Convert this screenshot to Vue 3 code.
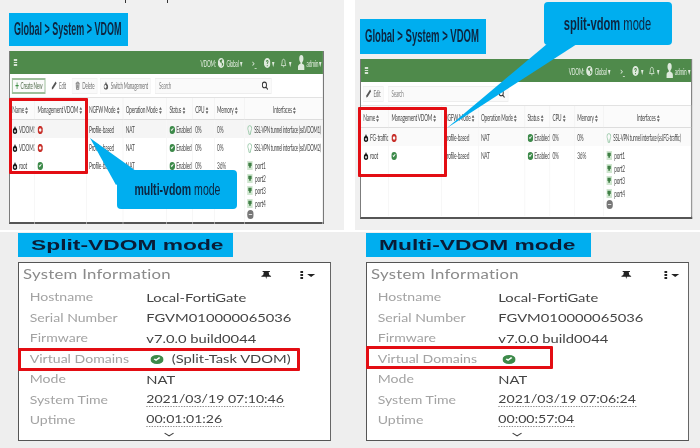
<template>
  <div class="page">
    <svg class="sprites" width="0" height="0" aria-hidden="true">
      <symbol id="i-vdom" viewBox="0 0 16 16" preserveAspectRatio="none"><path fill-rule="evenodd" d="M8 0l2.500 4.200C13.500 5.500 15 8 15 10.500 15 14 12 16 8 16s-7-2-7-5.500C1 8 2.500 5.500 5.500 4.200zM8 8a2.500 2.500 0 1 0 0 5 2.500 2.500 0 0 0 0-5z"/></symbol>
      <symbol id="i-check" viewBox="0 0 16 16" preserveAspectRatio="none"><path fill-rule="evenodd" d="M8 0a8 8 0 1 1 0 16A8 8 0 0 1 8 0zm4 5.200l-1.600-1.500L6.800 7.400 5.500 6 3.900 7.500l2.900 3z"/></symbol>
      <symbol id="i-no" viewBox="0 0 16 16" preserveAspectRatio="none"><path fill-rule="evenodd" d="M5 0h6l4 4v8l-4 4H5l-4-4V4zm3 4.500a3.500 3.500 0 1 0 0 7 3.500 3.500 0 0 0 0-7z"/></symbol>
      <symbol id="i-globe" viewBox="0 0 16 16" preserveAspectRatio="none"><path d="M8 0a8 8 0 1 1 0 16A8 8 0 0 1 8 0zM4 4l2 3 3 1 1 3-2 3 5-3-1-3-3-1 1-3 2-1-3-1z"/></symbol>
      <symbol id="i-help" viewBox="0 0 16 16" preserveAspectRatio="none"><path fill-rule="evenodd" d="M8 0a8 8 0 1 1 0 16A8 8 0 0 1 8 0zM7 11v2h2v-2zM8 3C6 3 5 4.200 5 6h2c0-1 .4-1.300 1-1.300s1 .4 1 1c0 1.200-2 1.300-2 3.800h2c0-1.800 2-2 2-4C11 4 9.800 3 8 3z"/></symbol>
      <symbol id="i-bell" viewBox="0 0 16 16" preserveAspectRatio="none"><path fill="none" stroke="currentColor" stroke-width="1.500" d="M8 2c-3 0-3.500 3-3.500 5S3 11 2.500 12h11C13 11 11.500 9 11.500 7S11 2 8 2zM6.500 14h3"/></symbol>
      <symbol id="i-user" viewBox="0 0 16 24" preserveAspectRatio="none"><path d="M8 0a5 6 0 0 1 5 6c0 2.500-1.500 5-3 6v2c3 .5 6 2.500 6 5v5H0v-5c0-2.500 3-4.500 6-5v-2C4.500 11 3 8.500 3 6a5 6 0 0 1 5-6z"/></symbol>
      <symbol id="i-mag" viewBox="0 0 16 16" preserveAspectRatio="none"><path fill="none" stroke="currentColor" stroke-width="2.200" d="M7 2a5 5 0 1 1 0 10A5 5 0 0 1 7 2zm3.500 8.500L15 15"/></symbol>
      <symbol id="i-pencil" viewBox="0 0 16 16" preserveAspectRatio="none"><path d="M12 1l3 3L5 14l-4 1 1-4z"/></symbol>
      <symbol id="i-trash" viewBox="0 0 16 16" preserveAspectRatio="none"><path fill="none" stroke="currentColor" stroke-width="1.300" d="M3 4h10M6 4V2h4v2M4 4l1 11h6l1-11M7 6v7M9 6v7"/></symbol>
      <symbol id="i-switch" viewBox="0 0 16 16" preserveAspectRatio="none"><path fill-rule="evenodd" d="M8 1l2 4c2.500 1 4 3 4 5.500C14 14 11.500 15 8 15s-6-1-6-4.500C2 8 3.500 6 6 5zm0 6.500a3 3 0 1 0 0 5 3 3 0 0 0 0-5z"/></symbol>
      <symbol id="i-port" viewBox="0 0 14 16" preserveAspectRatio="none"><path fill="#cfe6cf" d="M0 0h14v16H0z"/><path fill="#3f7f45" d="M3 3h8v6h-2v3H5V9H3z"/></symbol>
      <symbol id="i-tunnel" viewBox="0 0 12 16" preserveAspectRatio="none"><path fill="none" stroke="#8fc3a0" stroke-width="1.600" d="M6 1a4.500 4.500 0 0 1 4.500 4.500C10.500 8 8 9 7.500 15h-3C4 9 1.500 8 1.500 5.500A4.500 4.500 0 0 1 6 1z"/></symbol>
      <symbol id="i-more" viewBox="0 0 16 16" preserveAspectRatio="none"><circle cx="8" cy="8" r="8" fill="#777"/><path fill="#ddd" d="M4 7h8v2H4z"/></symbol>
      <symbol id="i-sort" viewBox="0 0 8 14" preserveAspectRatio="none"><path fill="#666" d="M4 0l3.500 5.500h-7zM4 14L.5 8.500h7z"/></symbol>
      <symbol id="i-pin" viewBox="0 0 20 16" preserveAspectRatio="none"><path d="M4 0h12v2h-2l1 6 3 2v1.500h-7L10 16l-1-4.500H2V10l3-2 1-6H4z"/></symbol>
    </svg>

    <div class="top">
      <section v-for="w in windows" :key="w.side" class="panel" :class="w.side">
        <i v-if="w.side === 'left'" class="cut cut-a"></i>
        <i v-if="w.side === 'left'" class="cut cut-b"></i>
        <h2 class="label"><span>Global &gt; System &gt; VDOM</span></h2>

        <div class="window-slot">
          <div class="window">
            <header class="topbar">
              <div class="burger"><b></b><b></b><b></b></div>
              <div class="topbar-right">
                <span>VDOM:</span>
                <svg class="ic-top"><use href="#i-globe" /></svg>
                <span>Global ▾</span>
                <span class="term">&gt;_</span>
                <svg class="ic-top help"><use href="#i-help" /></svg><span>▾</span>
                <svg class="ic-top bell"><use href="#i-bell" /></svg><span>▾</span>
                <svg class="ic-user"><use href="#i-user" /></svg>
                <span>admin ▾</span>
              </div>
            </header>

            <div class="toolbar">
              <button v-if="w.full" class="btn primary"><em>+</em>Create New</button>
              <button class="btn edit"><svg class="ic-btn"><use href="#i-pencil" /></svg>Edit</button>
              <button v-if="w.full" class="btn"><svg class="ic-btn"><use href="#i-trash" /></svg>Delete</button>
              <button v-if="w.full" class="btn"><svg class="ic-btn"><use href="#i-switch" /></svg>Switch Management</button>
              <div class="search">
                <span>Search</span>
                <svg class="ic-mag"><use href="#i-mag" /></svg>
              </div>
            </div>

            <table class="grid">
              <colgroup>
                <col v-for="(c, i) in w.cols" :key="i" :style="{ width: colWidth(w, c) }" />
              </colgroup>
              <thead>
                <tr>
                  <th v-for="h in heads" :key="h" :class="{ mid: h === 'Interfaces' }">
                    {{ h }} <svg class="sort"><use href="#i-sort" /></svg>
                  </th>
                </tr>
              </thead>
              <tbody>
                <tr v-for="(r, i) in w.rows" :key="r.name" :class="{ shaded: i === 0 && w.rows.length > 2, tinted: i === 0 && w.rows.length === 2 }">
                  <td class="name"><svg class="ic-vdom"><use href="#i-vdom" /></svg>{{ r.name }}</td>
                  <td>
                    <svg v-if="r.mgmt" class="ic-flag ok"><use href="#i-check" /></svg>
                    <svg v-else class="ic-flag bad"><use href="#i-no" /></svg>
                  </td>
                  <td>Profile-based</td>
                  <td>NAT</td>
                  <td><svg class="ic-status ok"><use href="#i-check" /></svg> Enabled</td>
                  <td>0%</td>
                  <td>{{ r.memory }}</td>
                  <td class="ifaces">
                    <template v-if="r.iface">
                      <svg class="ic-tunnel"><use href="#i-tunnel" /></svg> <span class="tunnel">{{ r.iface }}</span>
                    </template>
                    <template v-else>
                      <div v-for="p in ports" :key="p" class="port">
                        <svg class="ic-port"><use href="#i-port" /></svg> {{ p }}
                      </div>
                      <svg class="ic-more"><use href="#i-more" /></svg>
                    </template>
                  </td>
                </tr>
              </tbody>
            </table>
          </div>
        </div>

        <div class="redbox"></div>
        <svg class="tail" width="345" height="230">
          <polygon :points="w.tail" fill="#00aeef" />
        </svg>
        <div class="callout"><span><b>{{ w.mode }}</b> mode</span></div>
      </section>
    </div>

    <div class="bottom">
      <section v-for="c in cards" :key="c.side" class="info" :class="c.side">
        <h2 class="label wide"><span>{{ c.title }}</span></h2>
        <div class="card">
          <div class="card-inner">
            <div class="card-head">
              <span>System Information</span>
              <svg class="ic-pin"><use href="#i-pin" /></svg>
              <span class="kebab"><i></i><i></i><i></i><u></u></span>
            </div>
            <dl class="facts">
              <template v-for="f in c.facts" :key="f.k">
                <dt>{{ f.k }}</dt>
                <dd :class="{ dotted: f.dotted }">
                  <svg v-if="f.check" class="ic-vd"><use href="#i-check" /></svg>{{ f.v }}
                </dd>
              </template>
            </dl>
            <svg class="more" viewBox="0 0 12 6"><path d="M1 1l5 4 5-4" fill="none" stroke="#444" stroke-width="1.300" /></svg>
          </div>
          <div class="redbox"></div>
        </div>
      </section>
    </div>
  </div>
</template>

<script setup>
const heads = ['Name', 'Management VDOM', 'NGFW Mode', 'Operation Mode', 'Status', 'CPU', 'Memory', 'Interfaces']
const ports = ['port1', 'port2', 'port3', 'port4']

const windows = [
  {
    side: 'left',
    full: true,
    mode: 'multi-vdom',
    cols: [25, 52, 37, 44, 26, 22, 30, 79],
    tail: '90,138 136,171 116,185',
    rows: [
      { name: 'VDOM1', mgmt: false, memory: '0%', iface: 'SSL-VPN tunnel interface (ssl.VDOM1)' },
      { name: 'VDOM2', mgmt: false, memory: '0%', iface: 'SSL-VPN tunnel interface (ssl.VDOM2)' },
      { name: 'root', mgmt: true, memory: '36%' }
    ]
  },
  {
    side: 'right',
    full: false,
    mode: 'split-vdom',
    cols: [28, 53, 37, 47, 25, 25, 29, 88],
    tail: '92,128 192,44 222,44',
    rows: [
      { name: 'FG-traffic', mgmt: false, memory: '0%', iface: 'SSL-VPN tunnel interface (ssl.FG-traffic)' },
      { name: 'root', mgmt: true, memory: '36%' }
    ]
  }
]

function colWidth(w, c) {
  const total = w.cols.reduce((a, b) => a + b, 0)
  return (c / total) * 100 + '%'
}

function facts(vd, time, uptime) {
  return [
    { k: 'Hostname', v: 'Local-FortiGate' },
    { k: 'Serial Number', v: 'FGVM010000065036' },
    { k: 'Firmware', v: 'v7.0.0 build0044' },
    { k: 'Virtual Domains', v: vd, check: true },
    { k: 'Mode', v: 'NAT' },
    { k: 'System Time', v: time, dotted: true },
    { k: 'Uptime', v: uptime, dotted: true }
  ]
}

const cards = [
  { side: 'left', title: 'Split-VDOM mode', facts: facts('(Split-Task VDOM)', '2021/03/19 07:10:46', '00:01:01:26') },
  { side: 'right', title: 'Multi-VDOM mode', facts: facts('', '2021/03/19 07:06:24', '00:00:57:04') }
]
</script>

<style>
html, body { margin: 0; background: #fff; overflow: hidden; }
</style>

<style scoped>
.page {
  width: 700px;
  height: 448px;
  display: grid;
  grid-template-rows: 230px 218px;
  background: #fff;
  font-family: Lato, "Liberation Sans", sans-serif;
  overflow: hidden;
}
.sprites { position: absolute; }
svg { fill: currentColor; display: inline-block; }

.top {
  display: grid;
  grid-template-columns: 344px 345px;
  column-gap: 11px;
}
.panel {
  position: relative;
  background: #f0f0f0;
  display: flex;
  flex-direction: column;
  overflow: hidden;
}
.panel.left { padding: 13px 0 0 9px; }
.panel.right { padding: 19px 0 0 5px; }
.cut { position: absolute; top: 0; width: 1px; height: 3px; background: #333; }
.cut-a { left: 125px; }
.cut-b { left: 167px; }

.label {
  margin: 0;
  background: #00aeef;
  color: #0d2540;
  font: bold 18px/33px "Liberation Sans", Arial, sans-serif;
  height: 33px;
  overflow: hidden;
  filter: blur(0.4px);
}
.label span { display: inline-block; white-space: nowrap; transform-origin: left center; }
.panel.left .label { width: 119px; }
.panel.left .label span { transform: translateX(5px) scaleX(0.5); }
.panel.right .label { width: 126px; height: 35px; line-height: 35px; }
.panel.right .label span { transform: translateX(5px) scaleX(0.53); }

.window-slot { margin-top: 5px; }
.window {
  transform: scaleX(0.48);
  transform-origin: left top;
  background: #fff;
  border-right: 2px solid #666;
  border-bottom: 2px solid #555;
  border-left: 2px solid #777;
  display: flex;
  flex-direction: column;
  box-sizing: border-box;
  color: #4a4a4a;
  font-size: 10px;
  letter-spacing: -0.45px;
  filter: blur(0.4px);
}
.panel.left .window { width: 656px; height: 173px; }
.panel.right .window { width: 692px; height: 160px; }

.topbar {
  height: 23px;
  flex: none;
  background: #4f8a4b;
  color: #dfeadd;
  display: flex;
  align-items: center;
  justify-content: space-between;
  padding: 0 3px 0 8px;
}
.burger { display: flex; flex-direction: column; gap: 1px; width: 7px; }
.burger b { height: 1.500px; background: #d5e4d3; }
.topbar-right { display: flex; align-items: center; gap: 4px; white-space: nowrap; }
.term { margin: 0 0 0 17px; font-weight: bold; }
.ic-top { width: 14px; height: 10px; }
.ic-top.help { margin-left: 11px; }
.ic-top.bell { margin-left: 8px; }
.ic-user { width: 14px; height: 15px; margin-left: 10px; }

.toolbar {
  height: 24px;
  flex: none;
  display: flex;
  align-items: center;
  gap: 6px;
  padding: 0 4px;
  font-size: 9.500px;
  border-bottom: 1px solid #e2e2e2;
  box-sizing: border-box;
}
.btn {
  height: 16px;
  padding: 0 5px;
  display: flex;
  align-items: center;
  gap: 4px;
  background: #fafafa;
  border: 1px solid #f0f0f0;
  font: inherit;
  letter-spacing: inherit;
  color: #777;
  white-space: nowrap;
}
.btn.primary { border: 2px solid #9dbf9b; color: #55704f; }
.btn.primary em { color: #3f8f45; font: bold 13px/1 "Liberation Sans", sans-serif; }
.btn.edit { background: none; border-color: transparent; }
.panel.right .btn.edit { background: #fafafa; border-color: #f0f0f0; }
.ic-btn { width: 12px; height: 9px; color: #555; }
.ic-mag { width: 14px; height: 9px; color: #333; }
.search {
  width: 242px;
  height: 16px;
  display: flex;
  align-items: center;
  justify-content: space-between;
  padding: 0 6px;
  margin-left: 4px;
  background: #fafafa;
  border: 1px solid #eee;
  color: #888;
  box-sizing: border-box;
}
.panel.right .search { width: 250px; }

.grid { width: 100%; border-collapse: collapse; table-layout: fixed; }
.grid th {
  height: 21px;
  padding: 0 0 0 5px;
  font-weight: 400;
  text-align: left;
  white-space: nowrap;
  overflow: hidden;
  border-right: 1px solid #e8e8e8;
  border-bottom: 1px solid #ddd;
  background: #fbfbfb;
}
.grid th.mid { text-align: center; }
.sort { width: 7px; height: 7px; vertical-align: -1px; }
.grid td {
  height: 18px;
  padding: 0 0 0 5px;
  white-space: nowrap;
  overflow: hidden;
  border-right: 1px solid #efefef;
  vertical-align: middle;
}
.grid tr.shaded td { background: #f5f5f5; }
.grid tr.tinted td { background: #fafafa; }
.grid tr:last-child td { height: 67px; vertical-align: top; padding-top: 3px; }
.ic-vdom { width: 11px; height: 8px; margin-right: 3px; vertical-align: -1px; color: #1a1a1a; }
.ic-flag { width: 12px; height: 8px; vertical-align: -1px; }
.ic-status { width: 12px; height: 8px; vertical-align: -1px; }
.ok { color: #3d8a4a; }
.bad { color: #c8322c; }
.ic-tunnel { width: 11px; height: 10px; vertical-align: -2px; margin-right: 2px; }
.tunnel { font-size: 9.300px; letter-spacing: -0.5px; }
.right .tunnel { font-size: 9.200px; }
.port { height: 12.500px; line-height: 12.500px; }
.ic-port { width: 12px; height: 9px; vertical-align: -1px; margin-right: 3px; }
.ic-more { width: 14px; height: 9px; margin-top: 1px; }

.redbox {
  position: absolute;
  box-sizing: border-box;
  border: 3px solid #e30d13;
  border-radius: 1px;
}
.panel.left .redbox { left: 9px; top: 98px; width: 79px; height: 76px; }
.panel.right .redbox { left: 3px; top: 107px; width: 89px; height: 70px; }
.tail { position: absolute; left: 0; top: 0; }
.callout {
  position: absolute;
  background: #00aeef;
  border-radius: 4px;
  color: #0d2540;
  font: 17px/1 "Liberation Sans", Arial, sans-serif;
  display: flex;
  align-items: center;
  justify-content: center;
  filter: blur(0.3px);
}
.callout span { display: inline-block; transform: scaleX(0.62); white-space: nowrap; }
.panel.left .callout { left: 117px; top: 170px; width: 120px; height: 39px; }
.panel.right .callout { left: 189px; top: 2px; width: 128px; height: 43px; font-size: 18px; }

.bottom {
  display: grid;
  grid-template-columns: 350px 350px;
  background: #eee;
  margin-top: 2px;
}
.info { position: relative; display: flex; flex-direction: column; }
.info.left { padding: 1px 19px 0 18px; }
.info.right { padding: 1px 11px 0 16px; }
.label.wide { height: 24px; line-height: 24px; font-size: 15px; color: #0a1c36; }
.info.left .label.wide { width: 215px; }
.info.right .label.wide { width: 225px; }
.label.wide span { transform: translateX(13px) scaleX(1.52); }

.card {
  position: relative;
  margin-top: 5px;
  height: 179px;
  background: #fff;
  box-sizing: border-box;
  border: 1px solid #555;
  border-right-color: #666;
}
.card-inner {
  transform: scaleX(1.34);
  transform-origin: left top;
  width: 232px;
  padding: 4px 0 0 3px;
  box-sizing: border-box;
  filter: blur(0.3px);
}
.info.right .card-inner { width: 240px; }
.card-head {
  display: flex;
  align-items: center;
  height: 15px;
  color: #8a8a8a;
  font-size: 12.500px;
  letter-spacing: 0.2px;
}
.card-head > span:first-child { flex: 1; white-space: nowrap; }
.ic-pin { width: 9px; height: 8px; color: #222; margin-right: 21px; }
.kebab { display: flex; flex-direction: column; gap: 1px; width: 9px; position: relative; margin-right: 13px; }
.info.right .kebab { margin-right: 9px; }
.info.right .ic-pin { margin-right: 24px; }
.kebab i { width: 2px; height: 2px; background: #222; }
.kebab u { position: absolute; left: 5px; top: 3px; border: 3px solid transparent; border-top-color: #222; border-bottom: 0; }
.facts {
  margin: 5px 0 0 5px;
  display: grid;
  grid-template-columns: 87px 1fr;
  grid-auto-rows: 20.500px;
  align-items: center;
  font-size: 11px;
}
.info.right .facts { grid-template-columns: 90px 1fr; }
.facts dt { color: #a3a3a3; white-space: nowrap; font-size: 10.500px; }
.facts dd { margin: 0; color: #444; white-space: nowrap; justify-self: start; }
.facts dd.dotted { border-bottom: 1px dotted #888; line-height: 13px; font-size: 10.500px; }
.ic-vd { width: 10px; height: 9px; margin: 0 6px 0 3px; vertical-align: -1px; color: #3d8a4a; }
.more { display: block; width: 8px; height: 5px; margin: 1px 0 0 105px; }

.info.left .card > .redbox { left: -1px; top: 85px; width: 282px; height: 23px; }
.info.right .card > .redbox { left: -1px; top: 83px; width: 187px; height: 23px; }
</style>
